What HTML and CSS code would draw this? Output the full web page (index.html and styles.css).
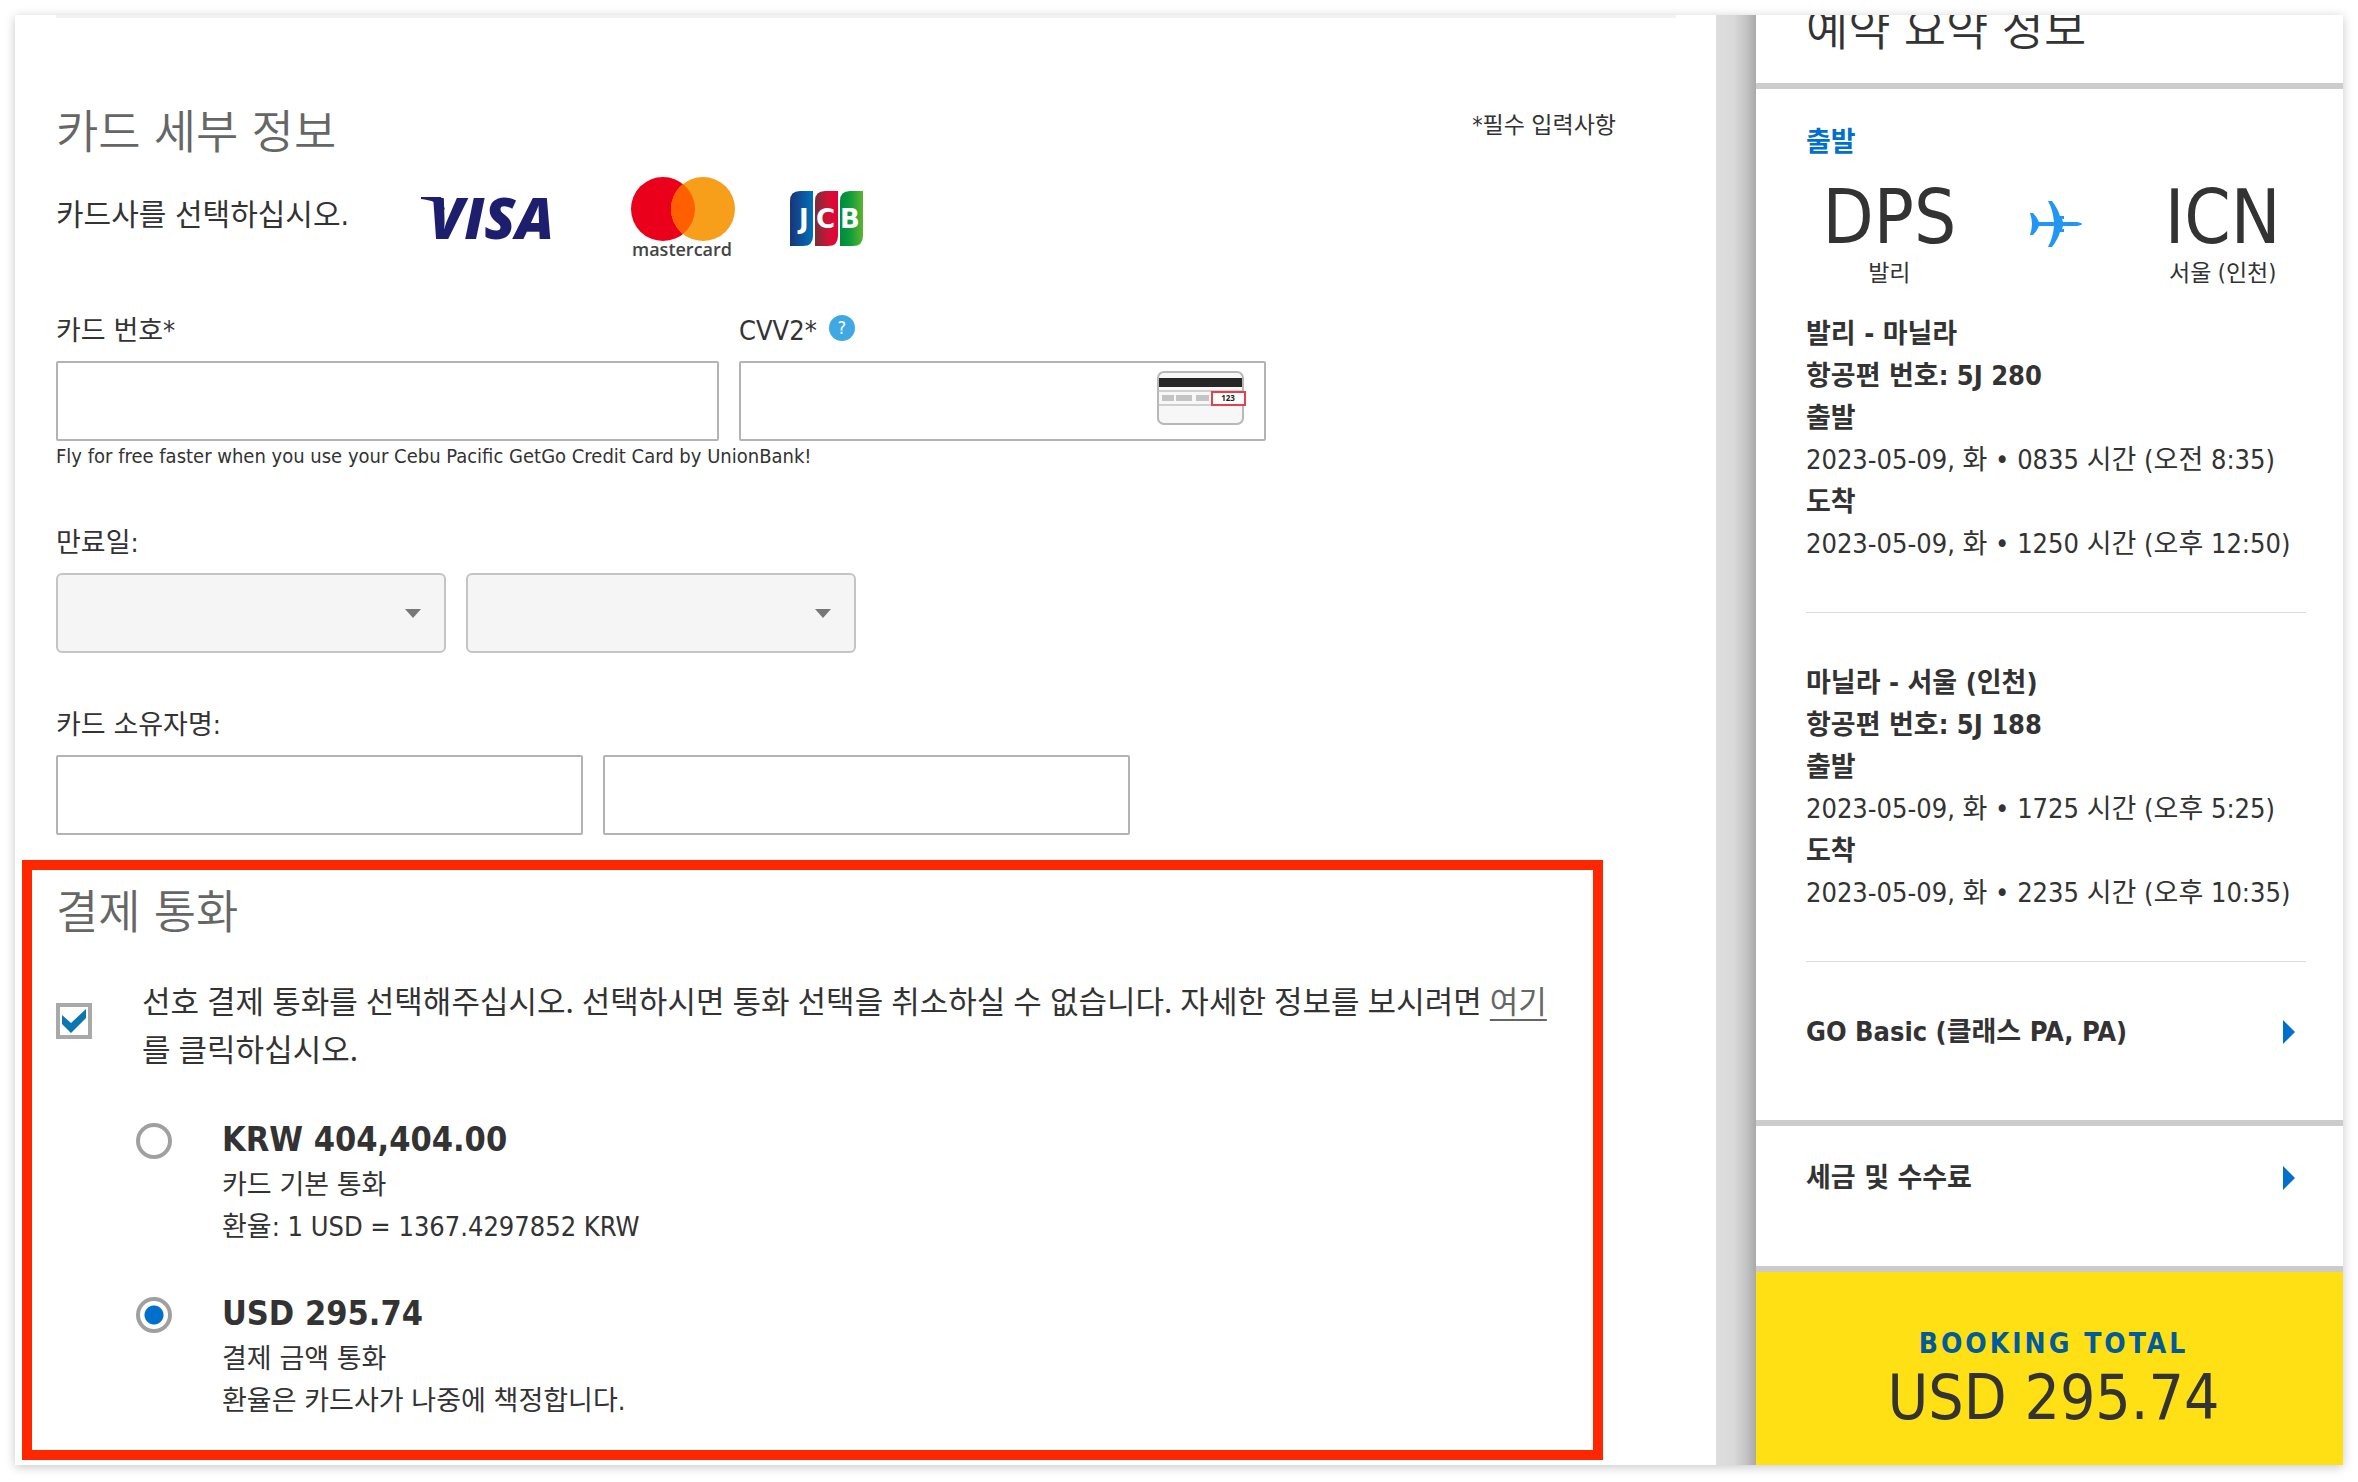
FILE: index.html
```html
<!DOCTYPE html>
<html lang="ko">
<head>
<meta charset="utf-8">
<meta name="viewport" content="width=device-width, initial-scale=1">
<title>카드 세부 정보</title>
<link rel="stylesheet" href="styles.css">
</head>
<body>
<div class="frame">
  <main class="payment">
    <div class="card-details">
      <div class="section-head">
        <h2 class="section-title">카드 세부 정보</h2>
        <p class="required-note">*필수 입력사항</p>
      </div>

      <div class="card-brands">
        <p class="brand-prompt">카드사를 선택하십시오.</p>
        <svg class="brand-visa" viewBox="0 0 136 46" role="img" aria-label="Visa">
          <path d="M0 1h20l4 13C18 7 10 4 0 3z" fill="#1e1e6e"/>
          <text x="8" y="43" class="visa-word">VISA</text>
        </svg>
        <svg class="brand-mastercard" viewBox="0 0 104 86" role="img" aria-label="Mastercard">
          <circle cx="32" cy="37" r="32" fill="#eb001b"/>
          <circle cx="72" cy="37" r="32" fill="#f79e1b"/>
          <path d="M52 12a32 32 0 0 1 0 50a32 32 0 0 1 0-50z" fill="#ff5f00"/>
          <text x="51" y="84" text-anchor="middle" class="mastercard-word">mastercard</text>
        </svg>
        <svg class="brand-jcb" viewBox="0 0 74 56" role="img" aria-label="JCB">
          <defs>
            <linearGradient id="jcb-blue"><stop offset="0" stop-color="#1a3478"/><stop offset="1" stop-color="#0070bb"/></linearGradient>
            <linearGradient id="jcb-red"><stop offset="0" stop-color="#75303a"/><stop offset=".6" stop-color="#d70f37"/><stop offset="1" stop-color="#e00436"/></linearGradient>
            <linearGradient id="jcb-green"><stop offset="0" stop-color="#008a3c"/><stop offset=".4" stop-color="#0b9a3c"/><stop offset="1" stop-color="#5cb531"/></linearGradient>
          </defs>
          <path d="M0 10Q0 0 10 0h13v45q0 10-10 10H0z" fill="url(#jcb-blue)"/>
          <path d="M25 10Q25 0 35 0h13v45q0 10-10 10H25z" fill="url(#jcb-red)"/>
          <path d="M50 10Q50 0 60 0h13v45q0 10-10 10H50z" fill="url(#jcb-green)"/>
          <text y="37" class="jcb-word"><tspan x="9">J</tspan><tspan x="26">C</tspan><tspan x="50">B</tspan></text>
        </svg>
      </div>

      <div class="field-row">
        <div class="field field-number">
          <label class="label" for="card-number">카드 번호*</label>
          <input class="text-box" id="card-number" type="text">
        </div>
        <div class="field field-name">
          <div class="label-line">
            <label class="label" for="cvv">CVV2*</label>
            <button class="help" type="button" aria-label="CVV2 도움말">?</button>
          </div>
          <div class="cvv-wrap">
            <input class="text-box" id="cvv" type="text">
            <svg class="cvv-card" viewBox="0 0 90 54" aria-hidden="true">
              <rect x="1" y="1" width="85" height="52" rx="6" fill="#f7f7f7" stroke="#b8b8b8" stroke-width="2"/>
              <rect x="2" y="7" width="83" height="9" fill="#262626"/>
              <path d="M2 20h83M2 34h83" stroke="#cfcfcf" stroke-width="2"/>
              <path d="M5 27h12M19 27h16M39 27h13" stroke="#c4c4c4" stroke-width="6"/>
              <rect x="55" y="21" width="33" height="13" fill="#fff" stroke="#e6404c" stroke-width="2"/>
              <text x="71" y="30" text-anchor="middle" class="cvv-digits">123</text>
            </svg>
          </div>
        </div>
      </div>
      <p class="hint">Fly for free faster when you use your Cebu Pacific GetGo Credit Card by UnionBank!</p>

      <div class="field-group">
        <label class="label" for="exp-month">만료일:</label>
        <div class="field-row">
          <select class="select-box" id="exp-month" aria-label="만료 월"><option></option></select>
          <select class="select-box" id="exp-year" aria-label="만료 연도"><option></option></select>
        </div>
      </div>

      <div class="field-group">
        <label class="label" for="first-name">카드 소유자명:</label>
        <div class="field-row">
          <input class="text-box field-name" id="first-name" type="text" aria-label="이름">
          <input class="text-box field-name" id="last-name" type="text" aria-label="성">
        </div>
      </div>
    </div>

    <section class="currency">
      <h2 class="section-title">결제 통화</h2>
      <div class="agree">
        <input class="check" id="agree" type="checkbox" checked>
        <p class="agree-text"><label for="agree">선호 결제 통화를 선택해주십시오. 선택하시면 통화 선택을 취소하실 수 없습니다. 자세한 정보를 보시려면 </label><a class="more" href="#">여기</a><label for="agree">를 클릭하십시오.</label></p>
      </div>
      <div class="options">
        <div class="option">
          <input class="radio" id="krw" type="radio" name="currency">
          <label for="krw"><strong class="amount">KRW 404,404.00</strong><span class="detail">카드 기본 통화</span><span class="detail">환율: 1 USD = 1367.4297852 KRW</span></label>
        </div>
        <div class="option">
          <input class="radio" id="usd" type="radio" name="currency" checked>
          <label for="usd"><strong class="amount">USD 295.74</strong><span class="detail">결제 금액 통화</span><span class="detail">환율은 카드사가 나중에 책정합니다.</span></label>
        </div>
      </div>
    </section>
  </main>

  <div class="gutter"></div>

  <aside class="summary">
    <h2 class="summary-title">예약 요약 정보</h2>
    <section class="journey">
      <h3 class="direction">출발</h3>
      <div class="route">
        <div class="airport"><span class="code">DPS</span><span class="city">발리</span></div>
        <svg class="plane" viewBox="0 0 52 46" aria-hidden="true">
          <path d="M0 12h3q4 4 6 9h15q-1-12-6-21h4q6 8 8 15h4v3h-2l1 3h14q5 1 5 2t-5 2H33l-1 3h2v3h-4q-2 7-8 15h-4q5-9 6-21H9q-2 5-6 9H0q2-6 2-11T0 12z" fill="#2196f3"/>
        </svg>
        <div class="airport"><span class="code">ICN</span><span class="city">서울 (인천)</span></div>
      </div>
      <div class="leg">
        <p class="strong">발리 - 마닐라</p>
        <p class="strong">항공편 번호: 5J 280</p>
        <p class="strong">출발</p>
        <p>2023-05-09, 화 • 0835 시간 (오전 8:35)</p>
        <p class="strong">도착</p>
        <p>2023-05-09, 화 • 1250 시간 (오후 12:50)</p>
      </div>
      <div class="leg">
        <p class="strong">마닐라 - 서울 (인천)</p>
        <p class="strong">항공편 번호: 5J 188</p>
        <p class="strong">출발</p>
        <p>2023-05-09, 화 • 1725 시간 (오후 5:25)</p>
        <p class="strong">도착</p>
        <p>2023-05-09, 화 • 2235 시간 (오후 10:35)</p>
      </div>
      <button class="expander" type="button">GO Basic (클래스 PA, PA)<svg class="caret" viewBox="0 0 12 24" aria-hidden="true"><path d="M0 0l12 12L0 24z"/></svg></button>
    </section>
    <section class="fees">
      <button class="expander" type="button">세금 및 수수료<svg class="caret" viewBox="0 0 12 24" aria-hidden="true"><path d="M0 0l12 12L0 24z"/></svg></button>
    </section>
    <div class="total">
      <p class="total-label">BOOKING TOTAL</p>
      <p class="total-value">USD 295.74</p>
    </div>
  </aside>
</div>
</body>
</html>
```
FILE: styles.css
```css
*, *::before, *::after { box-sizing: border-box; }

body {
  margin: 0;
  padding: 15px;
  background: #fff;
  color: #333;
  font-family: "DejaVu Sans Condensed", "Noto Sans CJK KR", sans-serif;
  font-size: 27px;
  line-height: 42px;
}

h2, h3, p { margin: 0; font-size: inherit; font-weight: 400; }

button, input, select { margin: 0; font: inherit; color: inherit; }

.frame {
  display: grid;
  grid-template-columns: minmax(0, 1fr) 40px 587px;
  overflow: hidden;
  background: #fff;
  box-shadow: 0 2px 10px rgba(0, 0, 0, .22);
}

/* Payment form */

.payment { padding: 0 113px 5px 7px; }

.card-details { padding-left: 34px; }

.card-details::before {
  content: "";
  display: block;
  height: 3px;
  margin-right: -73px;
  background: #f2f2f2;
}

.section-head {
  display: flex;
  justify-content: space-between;
  align-items: center;
  padding-top: 82px;
  margin-right: -13px;
}

.section-title { color: #666; font-size: 46px; font-weight: 350; line-height: 64px; }

.required-note { padding-bottom: 14px; font-size: 23px; line-height: 36px; }

.brand-prompt { font-size: 30px; line-height: 48px; }

.card-brands { display: flex; align-items: center; height: 86px; margin: 8px 0 52px; }

.brand-visa { width: 136px; height: 46px; margin: 8px 74px 0 72px; }
.brand-mastercard { width: 104px; height: 86px; margin-right: 55px; }
.brand-jcb { width: 74px; height: 56px; margin-top: 8px; }

.visa-word { fill: #1e1e6e; font: italic 800 57px "Open Sans", sans-serif; }
.mastercard-word { fill: #444; font: 600 18px "Open Sans", sans-serif; }
.jcb-word { fill: #fff; font: 700 26px "DejaVu Sans", sans-serif; }

.field-row { display: flex; gap: 20px; }

.label { display: block; line-height: 42px; margin-bottom: 9px; }
.label-line { display: flex; gap: 12px; }

.help {
  width: 26px;
  height: 26px;
  margin-top: 5px;
  padding: 0;
  border: 0;
  border-radius: 50%;
  background: #3fa9e5;
  color: #fff;
  font-size: 18px;
  line-height: 26px;
}

.text-box {
  width: 100%;
  height: 80px;
  padding: 0 20px;
  border: 2px solid #b3b3b3;
  border-radius: 2px;
  background: #fff;
}

.field-number { width: 663px; }
.field-name { width: 527px; }

.cvv-wrap { position: relative; }
.cvv-card { position: absolute; top: 10px; right: 19px; width: 90px; height: 54px; }
.cvv-digits { fill: #222; font: 700 8px "Noto Sans", sans-serif; }

.hint { font-size: 20px; line-height: 30px; }

.field-group { margin-top: 51px; }

.select-box {
  appearance: none;
  width: 390px;
  height: 80px;
  padding: 0 24px;
  border: 2px solid #c4c4c4;
  border-radius: 6px;
  background: #f5f5f5 url("data:image/svg+xml,%3Csvg xmlns='http://www.w3.org/2000/svg' width='16' height='9'%3E%3Cpath d='M0 0h16L8 9z' fill='%23777'/%3E%3C/svg%3E") no-repeat right 23px center;
}

.currency { margin-top: 25px; padding: 10px 24px 28px; border: 10px solid #ff2600; }

.agree { display: flex; gap: 50px; margin-top: 33px; }
.agree-text { font-family: "Noto Sans", "Noto Sans CJK KR", sans-serif; font-size: 31px; line-height: 48px; }

.check {
  appearance: none;
  flex: none;
  width: 36px;
  height: 36px;
  margin-top: 26px;
  border: 4px solid #a9a9a9;
}

.check:checked {
  background: url("data:image/svg+xml,%3Csvg xmlns='http://www.w3.org/2000/svg' width='28' height='28'%3E%3Cpath d='M2 8l9 8L26 2v9L11 26 2 17z' fill='%230b76b0'/%3E%3C/svg%3E") center no-repeat;
}

.more { color: #666; text-decoration-thickness: 2px; text-underline-offset: 6px; }

.options { display: grid; gap: 44px; margin-top: 45px; padding-left: 80px; }

.option { display: flex; gap: 50px; }

.radio {
  appearance: none;
  flex: none;
  width: 36px;
  height: 36px;
  margin-top: 5px;
  border: 4px solid #a0a0a0;
  border-radius: 50%;
}

.radio:checked { background: radial-gradient(circle, #0070cd 0 9px, #fff 10px); }

.amount { display: block; margin-bottom: 3px; font-size: 34px; line-height: 43px; }
.detail { display: block; }

/* Shaded strip between the form and the summary */

.gutter { background: linear-gradient(90deg, #dedede 0%, #d9d9d9 45%, #c4c4c4 75%, #a9a9a9 100%); }

/* Booking summary */

.summary { display: flex; flex-direction: column; }

.summary-title {
  padding: 0 50px 40px;
  border-bottom: 6px solid #ccc;
  font-size: 46px;
  font-weight: 350;
  line-height: 28px;
}

.journey { padding: 32px 37px 67px 50px; }

.direction { color: #0070cd; font-weight: 700; }

.route {
  display: grid;
  grid-template-columns: repeat(3, 1fr);
  justify-items: center;
  margin: 18px 0 20px;
}

.airport { display: grid; justify-items: center; }
.code { font-size: 74px; line-height: 72px; }
.city { font-size: 23px; line-height: 40px; }
.plane { width: 52px; height: 46px; margin-top: 20px; }

.leg { margin-bottom: 49px; padding-bottom: 47px; border-bottom: 1px solid #ddd; }

.strong { font-weight: 700; }

.expander {
  display: flex;
  justify-content: space-between;
  align-items: center;
  width: 100%;
  padding: 0 11px 0 0;
  border: 0;
  background: none;
  font-weight: 700;
  text-align: left;
}

.caret { width: 12px; height: 24px; fill: #0070cd; }

.fees { padding: 31px 37px 67px 50px; border: solid #ccc; border-width: 6px 0; }

.total { flex: 1; padding: 54px 20px 30px 28px; background: #ffe014; text-align: center; }
.total-label { color: #005b9c; font-size: 28px; font-weight: 700; letter-spacing: 3px; line-height: 36px; }
.total-value { font-size: 62px; line-height: 72px; }
```
